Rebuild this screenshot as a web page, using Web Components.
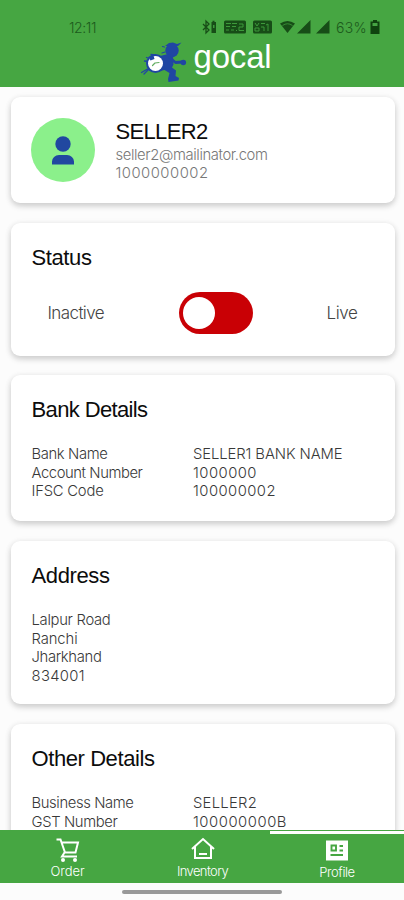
<!DOCTYPE html>
<html lang="en"><head><meta charset="utf-8"><title>gocal profile</title>
<style>
html,body{margin:0;height:900px;overflow:hidden}
body{background:#fcfcfc;font-family:Inter,"Liberation Sans",sans-serif;color:#444}
</style></head><body>
<profile-screen></profile-screen>
<script>
const define=(name,html,init)=>customElements.define(name,class extends HTMLElement{
  connectedCallback(){
    if(this.shadowRoot)return;
    this.attachShadow({mode:'open'}).innerHTML=html;
    if(init)init.call(this);
  }
});

// One line of text whose tracking is adjusted to fill the width in "w".
define('fit-text',`<style>:host{display:block;white-space:nowrap;width:max-content}span{display:inline-block}</style><span><slot></slot></span>`,function(){
  const s=this.shadowRoot.querySelector('span'),n=this.textContent.length;
  const gap=(+this.getAttribute('w')-s.getBoundingClientRect().width)/n;
  s.style.letterSpacing=gap.toFixed(3)+'px';
});

define('status-bar',`<style>
:host{display:flex;align-items:center;height:20px;padding:17px 23px 0 69px;color:#1c5a1c;font-size:14px;font-weight:300}
.icons{margin-left:auto;display:flex;align-items:center}
svg{display:block}
</style>
<fit-text w="27">12:11</fit-text>
<div class="icons">
<svg width="134" height="16" viewBox="0 0 134 16" fill="#174d17">
<path d="M1 5l6 6-3 3V2l3 3-6 6" fill="none" stroke="#174d17" stroke-width="1.3"/>
<path d="M9.500 3h1V1.800h2V3h1.500v11H9.500z"/><path d="M11 6h1.500v3H11z" fill="#3d9a3b"/>
<rect x="22" y="1.500" width="22" height="13" rx="1.500"/><path d="M24 4.500h5M30 4.500h5M24 7.500h4M30 7.500h4M24 11h3M29 11h3M37 5h4v3h-4v3.500h5M34 11.500h1" fill="none" stroke="#3d9a3b" stroke-width="1"/>
<rect x="51" y="1.500" width="19" height="13" rx="1.500"/><path d="M53 4l2 3 2-3M59 4.500h4M53 9h4v3h-4zM59 8h3v4M66 12V5l-2 1" fill="none" stroke="#3d9a3b" stroke-width="1"/>
<path d="M78 4.500Q85.500-.5 93 4.500L85.500 14z"/><path d="M80.500 6.500Q85.500 3 90.500 6.500" fill="none" stroke="#3d9a3b" stroke-width=".8"/>
<path d="M95 14.500h13.500V1zM114 14.500h13.500V1z"/></svg>
<fit-text w="31">63%</fit-text>
<svg width="14" height="16" viewBox="0 0 14 16" fill="#0f430f"><path d="M3.500 2.500h2.500V1h4v1.500h2.500V15h-9z"/><path d="M5.500 4h5v3h-5z" fill="#45a443"/></svg>
</div>`);

define('brand-mark',`<style>:host{display:flex;padding-left:138px;height:50px;align-items:flex-start}svg{display:block}
fit-text{font:33px/38px "Liberation Sans",sans-serif;color:#fff;margin:1px 0 0 5.500px}</style>
<svg width="50" height="46" viewBox="138 37 50 46" fill="#2046a3" stroke="#2046a3" stroke-linecap="round" stroke-linejoin="round">
<circle cx="172" cy="50.500" r="6.700" stroke="none"/>
<path d="M165 46l4-3 4-.5 4 1.500 4.500-1.500-3.500 3.500z" stroke="none"/>
<path d="M164.500 47l-2-.5M162 53l3-1" fill="none" stroke-width="1.200"/>
<path d="M160 56l8-2 5 1.500.5 9-1.500 3 4 3-.5 5.500 3.500 2-.5 2.500-10 1.500-.5-3 1.500-6-5-3-5 1z" stroke="none"/>
<path d="M170 58l5.500 4.500 7-.5" fill="none" stroke-width="2.800"/><circle cx="183.300" cy="62.500" r="2.800" stroke="none"/>
<circle cx="155.500" cy="63.500" r="9.500" stroke="none"/>
<path d="M141.500 72.500l6-3.500M144 74l5-5M146.500 57.500l3 1M151 54.500l4 .5M144.500 61l3 .5" fill="none" stroke-width="1.300"/>
<circle cx="155.500" cy="63.500" r="7.500" fill="#fff" stroke="none"/>
<path d="M148.500 57l5-1.500 1 3.500-4 1.500z" stroke="none"/>
<path d="M152.500 65.500l2.500-2.500 4-.5" fill="none" stroke="#63ad62" stroke-width="1.200"/></svg>
<fit-text w="78">gocal</fit-text>`);

define('app-header',`<style>:host{display:block;height:87px;background:#46a642}</style><status-bar></status-bar><brand-mark></brand-mark>`);

define('info-card',`<style>:host{display:block;box-sizing:border-box;border-radius:9px;background:#fff;padding:0 21px;
box-shadow:0 3px 6px rgba(0,0,0,.16),0 1px 7px rgba(0,0,0,.07)}
::slotted([slot=title]){font:22px/26px "Liberation Sans",sans-serif;color:#0c0c0c;margin-top:0}
slot[name=title]{display:block;padding-top:var(--title-top,22px)}
</style><slot name="title"></slot><slot></slot>`);

define('user-avatar',`<style>:host{display:grid;place-items:center;width:64px;height:64px;border-radius:50%;background:#8bf08b}</style>
<svg width="22" height="29" viewBox="0 0 22 29" fill="#2148a0"><circle cx="11" cy="8" r="7.700"/><path d="M0 28.500v-3a7 6.500 0 0 1 7-6.500h8a7 6.500 0 0 1 7 6.500v3z"/></svg>`);

define('user-summary',`<style>:host{display:flex;gap:20.500px;margin-left:-.5px}
.t{font:22px/25px "Liberation Sans",sans-serif;color:#0c0c0c;margin:1px 0 1.500px}.s{font-size:14.800px;line-height:18px;font-weight:300;color:#777}</style>
<user-avatar></user-avatar><div><fit-text class="t" w="92">SELLER2</fit-text><fit-text class="s" w="152">seller2@mailinator.com</fit-text><fit-text class="s" w="93">1000000002</fit-text></div>`);

define('toggle-row',`<style>:host{display:grid;grid-template-columns:131px 75px 73px auto;align-items:center;padding-left:16px;margin-top:21px;font-size:17px;font-weight:300;color:#444}
.sw{box-sizing:border-box;width:74px;height:42px;border-radius:21px;background:#c90005;padding:5px 4px}.sw i{display:block;width:32px;height:32px;border-radius:50%;background:#fff}</style>
<fit-text w="56.500">Inactive</fit-text><div class="sw" role="switch" aria-checked="false"><i></i></div><span></span><fit-text w="31">Live</fit-text>`);

define('detail-list',`<style>:host{display:grid;grid-template-columns:161.500px auto;grid-auto-rows:18.500px;margin-top:22px;font-size:14.800px;line-height:18.500px;font-weight:300;color:#383838}</style><slot></slot>`);

define('nav-tab',`<style>:host{display:flex;flex-direction:column;align-items:center;box-sizing:border-box;padding-top:7px;color:#fff;font-size:13px;line-height:16px;font-weight:300}
:host([active]){background:linear-gradient(#46a642 1.500px,#fff 1.500px,#fff 4.500px,#46a642 4.500px);padding-top:8px}</style><slot name="icon"></slot><slot></slot>`);

define('nav-bar',`<style>:host{display:grid;grid-template-columns:135px 135px 134px;height:53px;background:#46a642}svg{display:block;fill:none;stroke:#fff;stroke-width:2}</style>
<nav-tab><svg slot="icon" width="26" height="26" viewBox="0 0 26 26"><path d="M1.500 2.500h4l4.500 13h10.500l2.500-10H6.800M9.500 15.500L7 19.500h15"/><circle cx="8" cy="23" r="2" fill="#fff" stroke="none"/><circle cx="20" cy="23" r="2" fill="#fff" stroke="none"/></svg><fit-text w="34">Order</fit-text></nav-tab>
<nav-tab><svg slot="icon" width="26" height="26" viewBox="0 0 26 26"><path d="M2 12L13 2l11 10M5 9.500v11.500h16V9.500M9 17h8"/></svg><fit-text w="51">Inventory</fit-text></nav-tab>
<nav-tab active><svg slot="icon" width="26" height="26" viewBox="0 0 26 26"><path d="M2 2.500h22v20H2z" fill="#fff" stroke="none"/><path d="M7.500 7.500h4.500v5H7.500zM15.500 8h3.500M15.500 12.500h3.500M6.500 17h12.500" stroke="#46a642" stroke-width="1.900"/></svg><fit-text w="35.500">Profile</fit-text></nav-tab>`);

define('profile-screen',`<style>
:host{display:flex;flex-direction:column;height:900px;width:404px}
main{flex:1;min-height:0;overflow:hidden;display:flex;flex-direction:column;padding:10px 9.500px 0 10.500px}
info-card{flex:none}
.a{height:106px;margin-bottom:20px;padding-top:21px;--title-top:0}
.b{height:132.500px;margin-bottom:19.500px}.c{height:146px;margin-bottom:20px}.d{height:163px;margin-bottom:20px}.e{height:200px}
footer{height:17px;display:flex;justify-content:center}
footer i{width:160px;height:4px;border-radius:2px;background:#999;margin-top:7px}
</style>
<app-header></app-header>
<main>
<info-card class="a"><user-summary></user-summary></info-card>
<info-card class="b"><fit-text slot="title" w="60">Status</fit-text><toggle-row></toggle-row></info-card>
<info-card class="c"><fit-text slot="title" w="116">Bank Details</fit-text><detail-list>
<fit-text w="76">Bank Name</fit-text><fit-text w="149.500">SELLER1 BANK NAME</fit-text>
<fit-text w="111">Account Number</fit-text><fit-text w="64">1000000</fit-text>
<fit-text w="72">IFSC Code</fit-text><fit-text w="83">100000002</fit-text></detail-list></info-card>
<info-card class="d"><fit-text slot="title" w="78">Address</fit-text><detail-list>
<fit-text w="79">Lalpur Road</fit-text><i></i><fit-text w="46">Ranchi</fit-text><i></i><fit-text w="70">Jharkhand</fit-text><i></i><fit-text w="53.500">834001</fit-text></detail-list></info-card>
<info-card class="e"><fit-text slot="title" w="123">Other Details</fit-text><detail-list>
<fit-text w="102">Business Name</fit-text><fit-text w="64">SELLER2</fit-text>
<fit-text w="86">GST Number</fit-text><fit-text w="94">100000000B</fit-text></detail-list></info-card>
</main>
<nav-bar></nav-bar><footer><i></i></footer>`);
</script></body></html>
